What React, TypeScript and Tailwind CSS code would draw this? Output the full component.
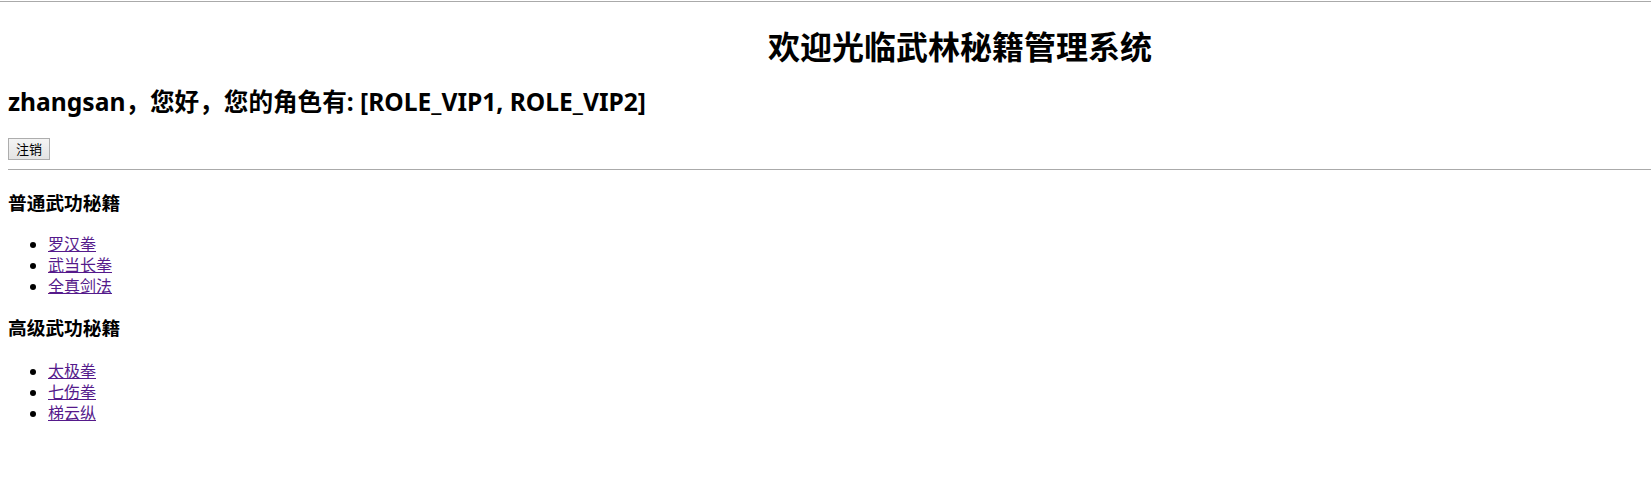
const basic = ["罗汉拳", "武当长拳", "全真剑法"];
const advanced = ["太极拳", "七伤拳", "梯云纵"];

function BookList({ items }: { items: string[] }) {
  return (
    <ul className="list-disc pl-10 text-[16px] leading-[21px]">
      {items.map((name) => (
        <li key={name}>
          <a href="#" className="text-[#551a8b] underline">
            {name}
          </a>
        </li>
      ))}
    </ul>
  );
}

export default function App() {
  return (
    <main className="h-[501px] overflow-hidden bg-white text-black font-['Noto_Sans','Noto_Sans_CJK_SC',sans-serif]">
      <div className="w-[1920px]">
        <div className="mt-px border-t border-[#aaaaaa]" />

        <div className="px-2">
          <h1 className="mt-[24px] text-center text-[32px] font-bold leading-[42px]">
            欢迎光临武林秘籍管理系统
          </h1>

          <h2 className="mt-[18px] text-[24.6px] font-bold leading-[32px]">
            zhangsan，您好，您的角色有: [ROLE_VIP1, ROLE_VIP2]
          </h2>

          <button className="mt-[20px] h-[22px] w-[42px] border border-[#adadad] bg-gradient-to-b from-[#f4f4f4] to-[#e4e4e4] text-[13px] leading-[20px]">
            注销
          </button>

          <hr className="mt-[9px] border-t border-[#aaaaaa]" />

          <h3 className="mt-[20px] text-[18.72px] font-bold leading-[25px]">普通武功秘籍</h3>
          <div className="mt-[19px]">
            <BookList items={basic} />
          </div>

          <h3 className="mt-[18px] text-[18.72px] font-bold leading-[25px]">高级武功秘籍</h3>
          <div className="mt-[21px]">
            <BookList items={advanced} />
          </div>
        </div>
      </div>
    </main>
  );
}
